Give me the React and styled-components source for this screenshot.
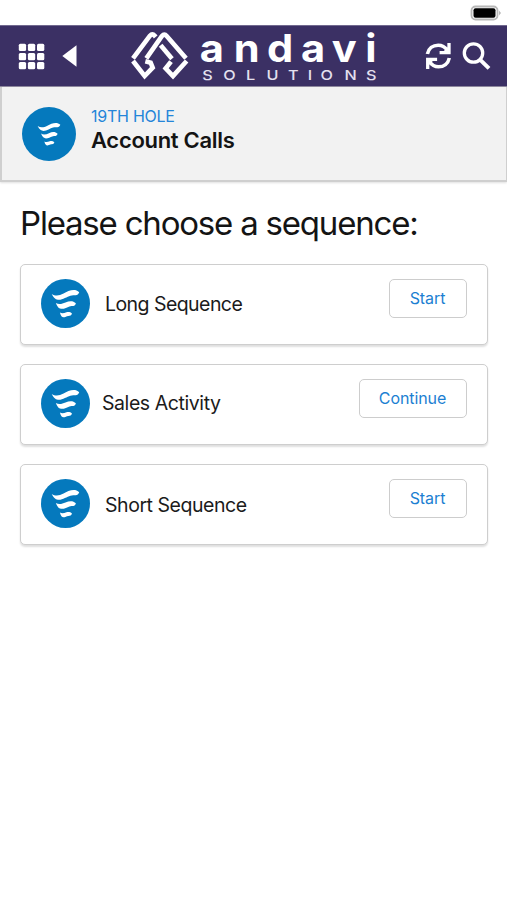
import React from 'react';
import styled, { createGlobalStyle } from 'styled-components';

const GlobalStyle = createGlobalStyle`
  * {
    box-sizing: border-box;
  }

  body {
    margin: 0;
    min-height: 100vh;
    background: #fff;
    color: #1b1b1b;
    font-family: Inter, "Liberation Sans", sans-serif;
  }
`;

const StyledStatusBar = styled.div`
  display: flex;
  justify-content: flex-end;
  height: 25px;
  padding: 5px 6px 0 0;
`;

const StyledNavBar = styled.header`
  display: flex;
  align-items: center;
  height: 62px;
  padding: 0 16px 0 18px;
  background: #3b3064;
  border-top: 1px solid #71698f;
  border-bottom: 1px solid #8f899f;

  svg {
    display: block;
    flex: none;
  }
`;

const StyledNavGroup = styled.div`
  display: flex;
  align-items: center;
  gap: ${({ $gap }) => $gap};
`;

const StyledLogo = styled.svg`
  margin: 0 auto 0 52px;
  overflow: visible;
`;

const StyledAccount = styled.section`
  display: flex;
  height: 95px;
  padding: 20px 20px 0;
  background: #f2f2f2;
  border: solid #cfcfcf;
  border-width: 0 1px 2px 2px;
  box-shadow: 0 1px 2px rgba(0, 0, 0, 0.12);
`;

const StyledAccountText = styled.div`
  display: flex;
  flex-direction: column;
  margin: -1px 0 0 15px;
`;

const StyledAccountName = styled.span`
  color: #2485d9;
  font-size: 16px;
  line-height: 20px;
  letter-spacing: -0.25px;
`;

const StyledAccountTitle = styled.h1`
  margin: 0;
  color: #141414;
  font-size: 22px;
  font-weight: 600;
  line-height: 28px;
  letter-spacing: -0.3px;
`;

const StyledMain = styled.main`
  padding: 21px 19px 20px 20px;
`;

const StyledHeading = styled.h2`
  margin: 0 0 20px;
  color: #141414;
  font-size: 33px;
  font-weight: 400;
  line-height: 41px;
  letter-spacing: -1.2px;
  white-space: nowrap;
`;

const StyledList = styled.div`
  display: flex;
  flex-direction: column;
  gap: 19px;
`;

const StyledCard = styled.article`
  display: flex;
  align-items: flex-start;
  height: 81px;
  padding: 14px 20px 0;
  background: #fff;
  border: 1px solid #cecece;
  border-radius: 5px;
  box-shadow: 0 2px 2px rgba(0, 0, 0, 0.13);
`;

const StyledCardName = styled.span`
  margin-left: ${({ $offset }) => $offset}px;
  padding-top: ${({ $drop }) => $drop}px;
  font-size: 19.5px;
  line-height: 49px;
  letter-spacing: ${({ $tracking }) => $tracking}px;
`;

const StyledButton = styled.button`
  width: ${({ $wide }) => ($wide ? 108 : 78)}px;
  height: 39px;
  margin-left: auto;
  padding: 0 1px 0 0;
  background: #fff;
  border: 1px solid #cdcdcd;
  border-radius: 5px;
  color: #1c7fd2;
  font: 400 16px/37px Inter, sans-serif;
  letter-spacing: -0.1px;
`;

const Battery = () => (
  <svg width="31" height="16" viewBox="0 0 31 16">
    <rect x="1.5" y="1.5" width="26" height="13" rx="4" fill="#fff" stroke="#b8b8b8" strokeWidth="1.8" />
    <rect x="3.5" y="3.2" width="22" height="9.6" rx="2" fill="#000" />
    <path d="M29 5.5l2 2.5-2 2.5z" fill="#b8b8b8" />
  </svg>
);

const GridIcon = () => (
  <svg width="27" height="27" viewBox="0 0 27 27" fill="#fff">
    {[0.8, 9.9, 19].map((y) => [0.8, 9.9, 19].map((x) => (
      <rect key={`${x}-${y}`} x={x} y={y} width="7.3" height="7.3" rx="1.5" />
    )))}
  </svg>
);

const BackIcon = () => (
  <svg width="15" height="22" viewBox="0 0 15 22">
    <path d="M14.5.2v21.6L.3 11z" fill="#fff" />
  </svg>
);

const RefreshIcon = () => (
  <svg width="27" height="28" viewBox="0 0 27 28" fill="none" stroke="#fff" strokeWidth="3.6">
    <path d="M2.4 12C3.5 6.4 8 3.2 13.2 3.2c4 0 7 2 9 5" />
    <path d="M24.3 16c-1.1 5.600-5.600 8.800-10.800 8.800-4 0-7-2-9-5" />
    <path d="M24 1v9.700H14.600M2.700 27v-9.700h9.400" strokeWidth="3.3" />
    <path d="M24 4v6.700h-7zM2.700 24v-6.700h7z" fill="#fff" stroke="none" />
  </svg>
);

const SearchIcon = () => (
  <svg width="29" height="28" viewBox="0 0 29 28" fill="none" stroke="#fff" strokeWidth="3.3">
    <circle cx="11.5" cy="11" r="9.2" />
    <path d="M18 17.600l9 8.800" strokeWidth="4" />
  </svg>
);

const Logo = () => (
  <StyledLogo width="250" height="60" viewBox="129 26 250 60">
    <g transform="translate(120 20) scale(0.3333)" fill="none" stroke="#fff" strokeWidth="14">
      <path d="M39 115L90 47q7-8 14 0l3 4" />
      <path d="M79 115L126 48q7-8 14 0L198 115" />
      <path d="M122 76L156 116" />
      <path d="M39 123L74 168L98 143L92 128L76 124" />
      <path d="M200 123L159 168L137 145L153 125" />
    </g>
    <text
      transform="scale(1.08 1)"
      x="185 216.5 247.3 278.700 307.200 338.300"
      y="62"
      fill="#fff"
      fontFamily="Inter, sans-serif"
      fontSize="38.5"
      fontWeight="700"
    >
      andavi
    </text>
    <text
      transform="scale(1.2 1)"
      x="168.5 186 205 222 240 256.5 267 287 305"
      y="79.6"
      fill="#e4e0ef"
      fontFamily="Inter, sans-serif"
      fontSize="13.5"
      fontWeight="500"
    >
      SOLUTIONS
    </text>
  </StyledLogo>
);

const SequenceIcon = ({ size, glyph = 1 }) => (
  <svg width={size} height={size} viewBox="0 0 50 50">
    <circle cx="25" cy="25" r="25" fill="#0579bd" />
    <g fill="#fff" transform={`translate(25 25) scale(${glyph}) translate(-25 -25)`}>
      <path d="M11 15.2C14.500 17.500 18.500 17.200 23 14.800C28 12 34.500 9.300 39 13.500C37.500 17.800 34 16 30 17C24.500 18.500 16 26.500 11 15.2Z" />
      <path d="M15.200 24.500C18 26.300 21.500 25.600 25 24C29 22.200 32.800 22 35.600 24.800C34.500 28.500 32 27.200 29 28C25 29.200 18.500 34.500 15.200 24.500Z" />
      <path d="M19.300 34.300C21.500 35.500 23.500 34.800 26 34C28 33.400 30 33.700 31.600 35.300C30.700 38.300 28.700 37.500 26.800 38C23.800 39 20.800 41 19.300 34.300Z" />
    </g>
  </svg>
);

const sequences = [
  { name: 'Long Sequence', action: 'Start', offset: 15, drop: 1, tracking: -0.55 },
  { name: 'Sales Activity', action: 'Continue', offset: 12, drop: 0, tracking: -0.42 },
  { name: 'Short Sequence', action: 'Start', offset: 15, drop: 2, tracking: -0.45 },
];

const App = () => (
  <>
    <GlobalStyle />
    <StyledStatusBar>
      <Battery />
    </StyledStatusBar>
    <StyledNavBar>
      <StyledNavGroup $gap="17px">
        <GridIcon />
        <BackIcon />
      </StyledNavGroup>
      <Logo />
      <StyledNavGroup $gap="10px">
        <RefreshIcon />
        <SearchIcon />
      </StyledNavGroup>
    </StyledNavBar>
    <StyledAccount>
      <SequenceIcon size={54} glyph={0.75} />
      <StyledAccountText>
        <StyledAccountName>19TH HOLE</StyledAccountName>
        <StyledAccountTitle>Account Calls</StyledAccountTitle>
      </StyledAccountText>
    </StyledAccount>
    <StyledMain>
      <StyledHeading>Please choose a sequence:</StyledHeading>
      <StyledList>
        {sequences.map(({ name, action, offset, drop, tracking }) => (
          <StyledCard key={name}>
            <SequenceIcon size={49} />
            <StyledCardName $offset={offset} $drop={drop} $tracking={tracking}>{name}</StyledCardName>
            <StyledButton type="button" $wide={action === 'Continue'}>{action}</StyledButton>
          </StyledCard>
        ))}
      </StyledList>
    </StyledMain>
  </>
);

export default App;
